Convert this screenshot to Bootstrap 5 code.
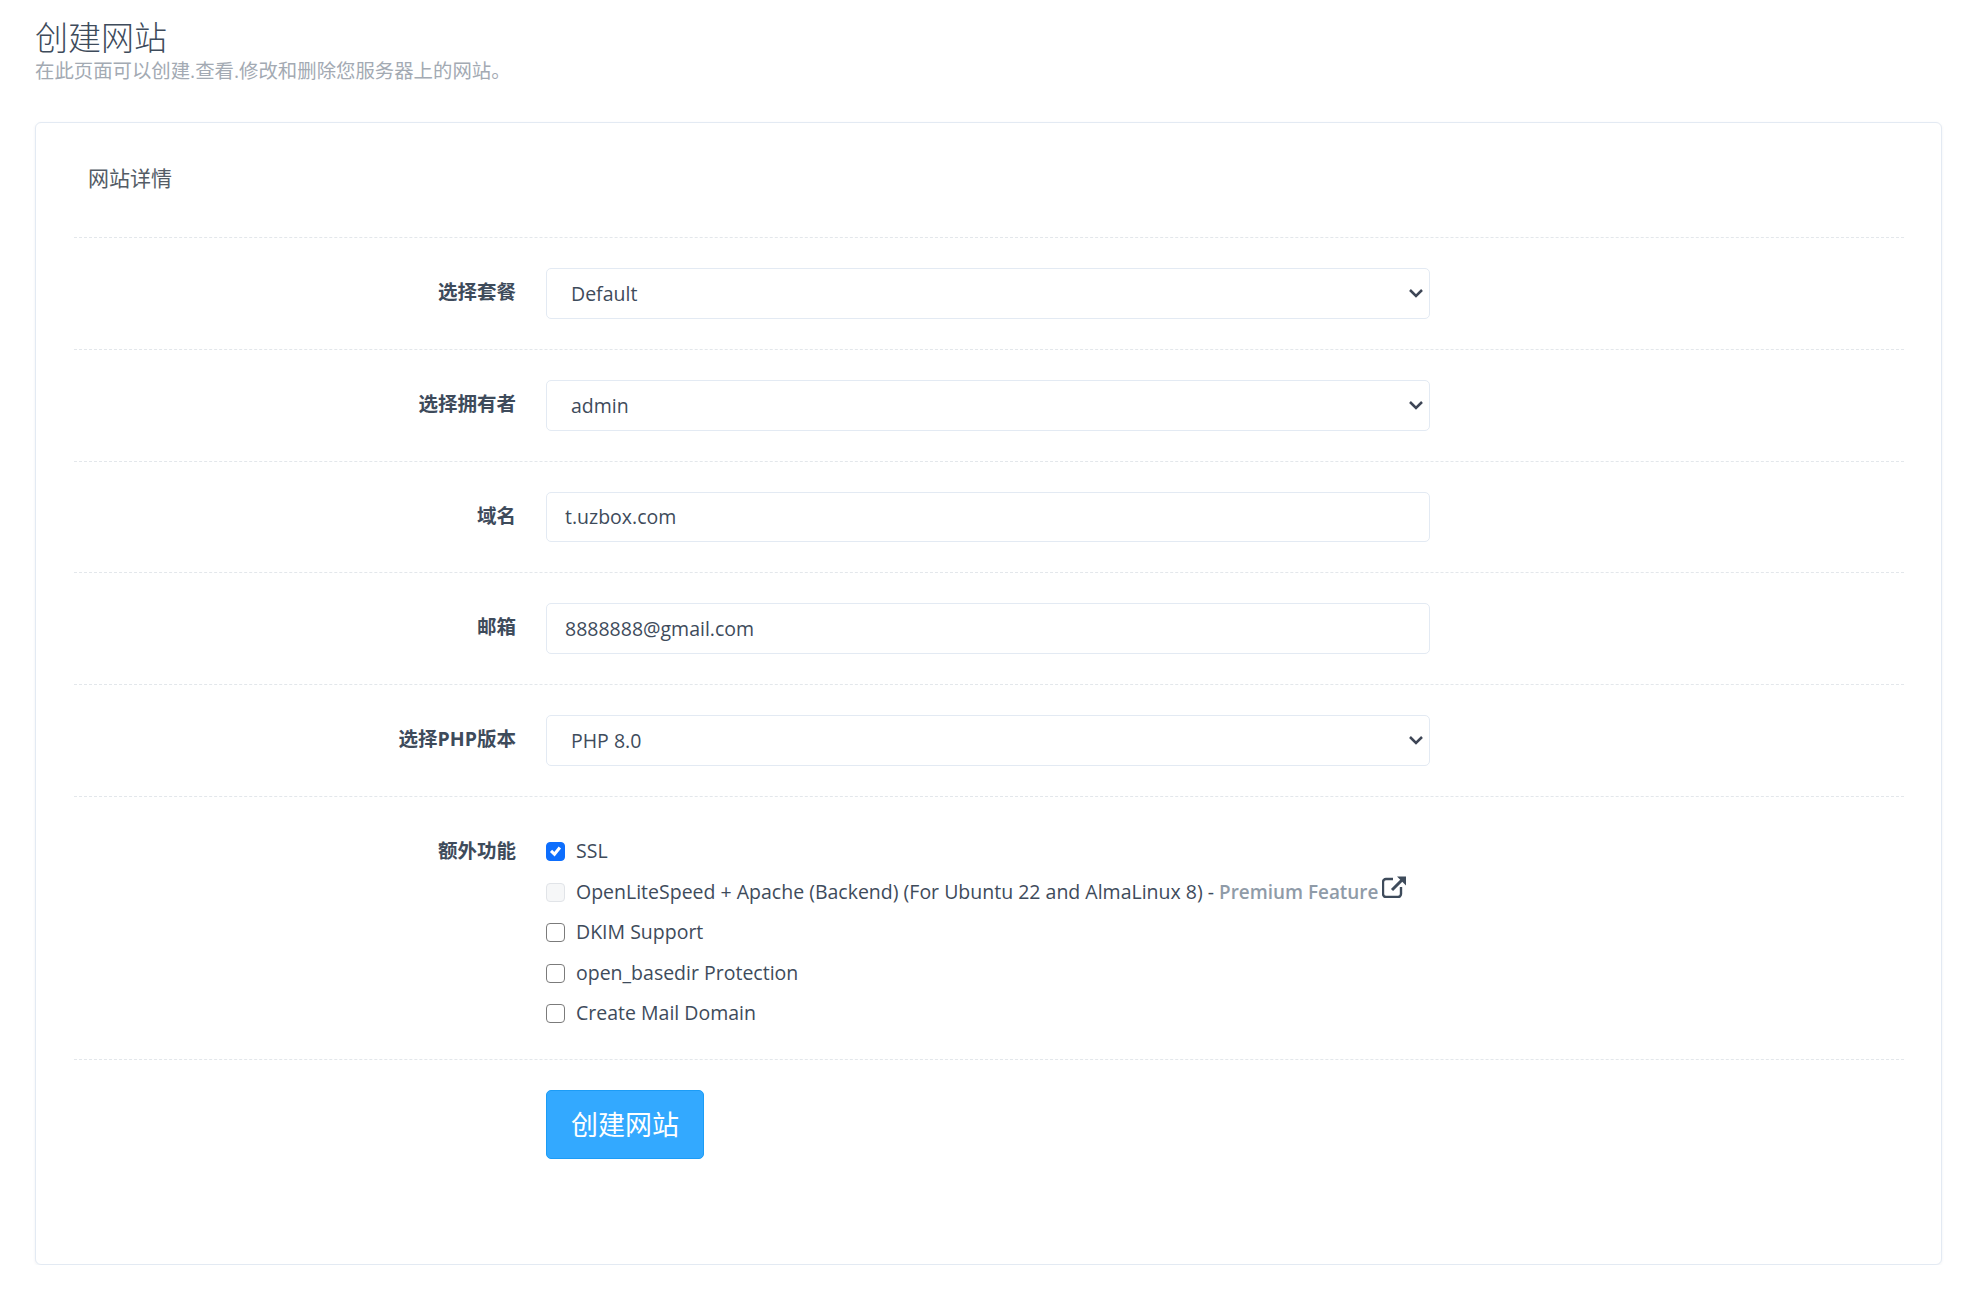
<!DOCTYPE html>
<html lang="zh">
<head>
<meta charset="utf-8">
<title>创建网站</title>
<link href="https://cdn.jsdelivr.net/npm/bootstrap@5.3.0/dist/css/bootstrap.min.css" rel="stylesheet">
<style>
body{background:#fff;color:#3e4b5b;font-family:"Open Sans","Noto Sans CJK SC",sans-serif;font-size:19px}
.page-wrap{padding:16px 27px 0 35px}
.page-title{font-size:33px;font-weight:300;line-height:44px;margin:0;color:#3e4b5b}
.page-sub{font-size:19.4px;line-height:24px;color:#a3aab3;margin:-1px 0 39px}
.site-panel{border:1px solid #e3eaf3;border-radius:6px;box-shadow:0 1px 3px rgba(60,80,110,.08);padding:0 37px 105px 38px;height:1143px}
.panel-head{font-size:21px;line-height:28px;color:#545c66;padding:41px 14px 45px;margin:0;border-bottom:1px dashed #e3e7eb}
.form-line{--bs-gutter-x:30px;margin-left:0;margin-right:0;padding:30px 0;border-bottom:1px dashed #e3e7eb}
.form-line.last-line{border-bottom:0}
.form-line>*{flex:none}
.line-label{font-weight:700;font-size:19.5px;line-height:48px;text-align:right;width:457px;color:#3e4b5b}
.line-body{width:914px}
.form-select,.form-control{height:50.75px;font-size:19.5px;color:#3e4b5b;border:1px solid #e3eaf3;border-radius:5px}
.form-select{padding:0 40px 0 24px;background-image:url("data:image/svg+xml,%3csvg xmlns='http://www.w3.org/2000/svg' viewBox='0 0 16 16'%3e%3cpath fill='none' stroke='%233e4656' stroke-width='2.5' d='M2 5l6 6 6-6'/%3e%3c/svg%3e");background-position:right 5.5px center;background-size:16px 16px}
.form-control{padding:0 18px}
.check-stack{padding-top:4px;margin-bottom:-5px}
.form-check{display:flex;align-items:center;min-height:40.6px;margin:0;padding:0;gap:11px;font-size:19.5px;line-height:26px}
.form-check .form-check-input{float:none;margin:1px 0 0;width:19px;height:19px;flex:none;border-color:#7b7b7b;border-radius:4px}
.form-check .form-check-input:checked{background-color:#0d6efd;border-color:#0d6efd;background-image:url("data:image/svg+xml,%3csvg xmlns='http://www.w3.org/2000/svg' viewBox='0 0 20 20'%3e%3cpath fill='none' stroke='%23fff' stroke-linecap='square' stroke-width='3.6' d='M6 10.5l2.8 2.8 5.2-6.6'/%3e%3c/svg%3e")}
.form-check .form-check-input:disabled{opacity:1;background-color:#f6f7f8;border-color:#e1e4e8}
.form-check-label{color:#3e4b5b;opacity:1!important}
.premium-link{color:#8f9ba8;font-weight:600;font-size:18.9px;text-decoration:none}
.ext-icon{width:24px;height:22px;vertical-align:-1px;margin-left:4px;position:relative;top:-2px}
.create-btn{width:158px;height:69px;padding:3px 0 0;background:#33a9ff;border:1px solid #1c9cf6;border-radius:5px;font-size:27px;color:#fff}
</style>
</head>
<body>
<div class="page-wrap">
  <h1 class="page-title">创建网站</h1>
  <p class="page-sub">在此页面可以创建.查看.修改和删除您服务器上的网站。</p>
  <div class="site-panel bg-white">
    <h2 class="panel-head fw-normal">网站详情</h2>
    <form>
      <div class="row form-line">
        <label class="line-label">选择套餐</label>
        <div class="line-body"><select class="form-select"><option>Default</option></select></div>
      </div>
      <div class="row form-line">
        <label class="line-label">选择拥有者</label>
        <div class="line-body"><select class="form-select"><option>admin</option></select></div>
      </div>
      <div class="row form-line">
        <label class="line-label">域名</label>
        <div class="line-body"><input class="form-control" type="text" value="t.uzbox.com"></div>
      </div>
      <div class="row form-line">
        <label class="line-label">邮箱</label>
        <div class="line-body"><input class="form-control" type="text" value="8888888@gmail.com"></div>
      </div>
      <div class="row form-line">
        <label class="line-label">选择PHP版本</label>
        <div class="line-body"><select class="form-select"><option>PHP 8.0</option></select></div>
      </div>
      <div class="row form-line">
        <label class="line-label">额外功能</label>
        <div class="line-body check-stack">
          <div class="form-check"><input class="form-check-input" type="checkbox" id="c1" checked><label class="form-check-label" for="c1">SSL</label></div>
          <div class="form-check"><input class="form-check-input" type="checkbox" id="c2" disabled><label class="form-check-label" for="c2">OpenLiteSpeed + Apache (Backend) (For Ubuntu 22 and AlmaLinux 8) - <a class="premium-link" href="#">Premium Feature</a><svg class="ext-icon" viewBox="0 0 24 22" fill="none" stroke="#3e4b5b" stroke-width="2.4"><path d="M11 3H4a3 3 0 0 0-3 3v12a3 3 0 0 0 3 3h12a3 3 0 0 0 3-3v-7"/><path d="M10 14L20 4" stroke-width="3"/><path d="M15 0.5h9v9z" fill="#3e4b5b" stroke="none"/></svg></label></div>
          <div class="form-check"><input class="form-check-input" type="checkbox" id="c3"><label class="form-check-label" for="c3">DKIM Support</label></div>
          <div class="form-check"><input class="form-check-input" type="checkbox" id="c4"><label class="form-check-label" for="c4">open_basedir Protection</label></div>
          <div class="form-check"><input class="form-check-input" type="checkbox" id="c5"><label class="form-check-label" for="c5">Create Mail Domain</label></div>
        </div>
      </div>
      <div class="row form-line last-line">
        <div class="line-label"></div>
        <div class="line-body"><button type="button" class="btn create-btn">创建网站</button></div>
      </div>
    </form>
  </div>
</div>
<script src="https://cdn.jsdelivr.net/npm/bootstrap@5.3.0/dist/js/bootstrap.bundle.min.js"></script>
</body>
</html>
